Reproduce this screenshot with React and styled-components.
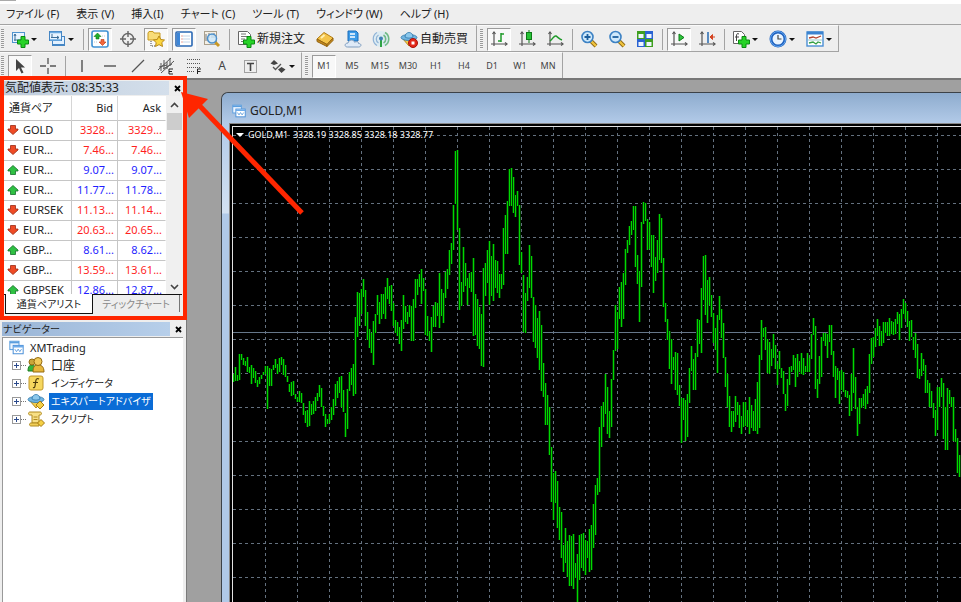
import styled, { createGlobalStyle, css } from "styled-components";

const colors = {
  face: "#eeeeee",
  line: "#a3a3a3",
  red: "#ff2600",
  down: "#ff1f1f",
  up: "#1f1fff",
  bar: "#00d800",
  barEdge: "#003a00",
  grid: "#64717f",
};

const GlobalStyle = createGlobalStyle`
  * { box-sizing: border-box; }
  body {
    margin: 0;
    overflow: hidden;
    color: #222;
    font-family: "Noto Sans", "Noto Sans CJK JP", sans-serif;
    font-size: 12px;
    line-height: 16px;
    font-feature-settings: "palt";
  }
  button {
    border: 0;
    padding: 0;
    background: none;
    color: inherit;
    font: inherit;
    font-feature-settings: inherit;
    white-space: nowrap;
  }
  svg { display: block; flex: none; }
`;

const Page = styled.div`
  position: relative;
  display: flex;
  flex-direction: column;
  height: 100vh;
  background: ${colors.face};
  overflow: hidden;
`;

const TitleEdge = styled.div`
  height: 4px;
  flex: none;
  background: #fff;

  &::before {
    content: "";
    display: block;
    width: 16px;
    height: 1px;
    background: #aaa;
  }
`;

const MenuBar = styled.nav`
  display: flex;
  align-items: center;
  flex: none;
  height: 21px;
  gap: 17px;
  padding-left: 6px;
  font-size: 11px;
  border-bottom: 1px solid ${colors.line};
`;

const ToolRow = styled.div`
  display: flex;
  flex: none;
  height: ${({ $last }) => ($last ? "28px" : "27px")};
  border-bottom: ${({ $last }) => ($last ? "2px solid #777" : "0")};
`;

const ToolGroup = styled.div`
  display: flex;
  align-items: center;
  gap: 4px;
  padding: 1px ${({ $end = 2 }) => $end}px 0 ${({ $start = 0 }) => $start}px;
  border-top: 1px solid #fafafa;
  border-right: 1px solid ${colors.line};
  border-bottom: ${({ $flat }) => ($flat ? "0" : `1px solid ${colors.line}`)};
`;

const Grip = styled.span`
  width: 3px;
  height: 20px;
  margin-left: 1px;
  background: repeating-linear-gradient(#999 0 1px, #f4f4f4 1px 2px);
`;

const Divider = styled.span`
  width: 1px;
  height: 21px;
  margin-left: 1px;
  background: ${colors.line};
`;

const ToolButton = styled.button`
  display: flex;
  align-items: center;
  justify-content: ${({ $wide }) => ($wide ? "flex-start" : "center")};
  gap: 2px;
  width: ${({ $label, $menu }) => ($label ? "auto" : $menu ? "33px" : "24px")};
  height: 23px;
  padding: 0 ${({ $label }) => ($label ? "4px" : "0")} 0 ${({ $wide }) => ($wide ? "3px" : "0")};
  font-size: ${({ $small }) => ($small ? "9px" : "12px")};
  color: ${({ $label }) => ($label ? "#222" : "#444")};

  ${({ $on }) =>
    $on &&
    css`
      background: #f8f8f8;
      border: 1px solid #fff;
      border-top-color: #9b9b9b;
      border-left-color: #9b9b9b;
    `}
`;

const Caret = styled.span`
  border: 3px solid transparent;
  border-top-color: #111;
  border-bottom: 0;
`;

const Body = styled.div`
  display: flex;
  flex: 1;
  min-height: 0;
`;

const Sidebar = styled.aside`
  display: flex;
  flex-direction: column;
  flex: none;
  width: 187px;
  border-right: 1px solid #7a7a7a;
`;

const Market = styled.section`
  position: relative;
  flex: none;
  height: 240px;
  padding: 0 4px;

  &::after {
    content: "";
    position: absolute;
    inset: -4px -1px 0 0;
    border: 4px solid ${colors.red};
    pointer-events: none;
  }
`;

const PanelTitle = styled.header`
  display: flex;
  height: 16px;
  line-height: 15px;
  align-items: center;
  justify-content: space-between;
`;

const PanelName = styled.h2`
  flex: 1;
  height: 14px;
  margin: 0;
  padding-left: 1px;
  font-size: ${({ $active }) => ($active ? "10px" : "12px")};
  line-height: 14px;
  font-weight: 400;
  background: ${({ $active }) =>
    $active
      ? "linear-gradient(90deg, #9ab5d6, #b7cfea)"
      : "linear-gradient(90deg, #bfcddd, #d4dfeb)"};
`;

const CloseButton = styled.button`
  display: flex;
  align-items: center;
  justify-content: flex-end;
  width: 13px;
  height: 14px;
  padding-right: 1px;
`;

const QuoteArea = styled.div`
  display: flex;
  height: 199px;
  overflow: hidden;
  background: #fff;
  border-bottom: 1px solid #111;
`;

const QuoteTable = styled.table`
  flex: 1;
  align-self: flex-start;
  table-layout: fixed;
  border-collapse: separate;
  border-spacing: 0;
  font-size: 11px;
`;

const headWidths = { symbol: "68px", bid: "46px", ask: "48px" };

const Head = styled.th`
  height: 25px;
  width: ${({ $column }) => headWidths[$column]};
  padding: 0 4px 1px 5px;
  border-bottom: 1px solid #c6c6c6;
  border-right: 1px solid #d6d6d6;
  font-weight: 400;
  text-align: ${({ $column }) => ($column === "symbol" ? "left" : "right")};

  &:last-child { border-right-color: #fff; }
`;

const Cell = styled.td`
  height: 20px;
  padding: 0 3px 2px 0;
  border-bottom: 1px solid #c6c6c6;
  border-right: 1px solid #c6c6c6;
  text-align: right;
  white-space: nowrap;
  color: ${({ $up }) => ($up ? colors.up : colors.down)};

  &:last-child { border-right-color: #fff; }
`;

const SymbolCell = styled(Cell)`
  padding-left: 3px;
  color: #222;
`;

const SymbolBox = styled.span`
  display: flex;
  align-items: center;
  gap: 4px;
`;

const ScrollBar = styled.div`
  display: flex;
  flex-direction: column;
  align-items: center;
  justify-content: space-between;
  width: 16px;
  padding: 6px 0 4px;
  background: #f0f0f0;
`;

const ScrollThumb = styled.span`
  width: 15px;
  height: 17px;
  margin: 5px 0 auto;
  background: #cdcdcd;
`;

const Tabs = styled.div`
  display: flex;
  height: 22px;
  align-items: flex-start;
  padding-left: 1px;
`;

const Tab = styled.button`
  width: ${({ $on }) => ($on ? "88px" : "87px")};
  height: ${({ $on }) => ($on ? "20px" : "17px")};
  font-size: 10px;
  color: ${({ $on }) => ($on ? "#222" : "#888")};
  border-right: 1px solid #777;

  ${({ $on }) =>
    $on &&
    css`
      margin-top: -1px;
      background: #fff;
      border: 1px solid #111;
      border-top: 0;
    `}
`;

const Navigator = styled.section`
  display: flex;
  flex: 1;
  flex-direction: column;
  padding: 1px 3px 0 2px;
`;

const Tree = styled.ul`
  flex: 1;
  margin: 0;
  padding: 0 0 0 6px;
  list-style: none;
  background: #fff;
  border-top: 1px solid #999;
  border-left: 1px solid #999;
`;

const Node = styled.li`
  display: flex;
  align-items: center;
  height: 18px;
  gap: 4px;
`;

const Expander = styled.button`
  display: grid;
  place-items: center;
  width: 9px;
  height: 9px;
  margin-left: 3px;
  border: 1px solid #999;
  background: #fff;
`;

const Dots = styled.span`
  width: 5px;
  margin: 0 -3px 0 -4px;
  border-top: 1px dotted #777;
`;

const NodeName = styled.span`
  padding: 0 2px;
  line-height: 17px;
  font-size: ${({ $size = 10 }) => $size}px;
  color: ${({ $on }) => ($on ? "#fff" : "#222")};
  background: ${({ $on }) => ($on ? "#0a6cd6" : "transparent")};
`;

const Workspace = styled.main`
  display: flex;
  flex: 1;
  min-width: 0;
  padding: 12px 0 0 34px;
  background: #a0a0a0;
`;

const ChartWindow = styled.section`
  display: flex;
  flex: 1;
  flex-direction: column;
  min-width: 0;
  padding-left: 7px;
  border: 1px solid #3c4248;
  border-width: 1px 0 0 1px;
  border-radius: 7px 0 0 0;
  background: linear-gradient(#8eacce, #b2cae8 30px, #d3e1f2 120px, #b0c9e8 121px);
`;

const ChartTitle = styled.header`
  display: flex;
  align-items: center;
  gap: 4px;
  height: 30px;
  margin-left: -7px;
  padding: 5px 0 0 10px;
  background: linear-gradient(#8eacce, #b2cae8);
  border-radius: 7px 0 0 0;
`;

const ChartFrame = styled.div`
  flex: 1;
  min-height: 0;
  padding: 2px 0 0 2px;
  background: #000;
  border: 1px solid #888;
  border-width: 1px 0 0 1px;
`;

const ChartPane = styled.div`
  position: relative;
  height: 100%;
  border: 1px solid #e2e2e2;
  border-width: 1px 0 0 1px;
`;

const ChartInfo = styled.div`
  position: absolute;
  top: 0;
  left: 3px;
  display: flex;
  align-items: center;
  gap: 4px;
  color: #fff;
  font-size: 9px;
  white-space: pre;

  &::before {
    content: "";
    border: 4px solid transparent;
    border-top-color: #fff;
    border-bottom: 0;
  }
`;

const Callout = styled.svg`
  position: absolute;
  left: 176px;
  top: 86px;
`;

// one "high-low" pair for each minute, in pane pixels counted from PANE_Y
const PANE_X = 233;
const PANE_Y = 127;
const bars = `
374-382 367-381 375-381 354-380 354-360 358-365 361-366 357-372 367-373 365-384 368-378 371-383
380-387 377-384 375-379 372-375 366-374 366-409 368-386 369-386 365-370 359-368 364-374 358-372
357-365 359-375 365-377 376-382 384-392 382-396 381-395 394-399 397-402 391-402 393-403 403-415
411-423 410-427 401-426 404-415 401-414 397-411 393-401 385-397 388-407 406-416 414-427 419-424
414-423 407-420 399-415 384-406 381-398 377-393 376-407 390-412 413-437 389-429 372-391 368-385
364-396 317-394 292-337 293-326 289-314 279-297 290-326 312-340 329-348 333-353 321-365 314-333
295-315 302-324 294-319 294-314 287-319 278-299 286-304 285-311 303-326 320-333 322-336 327-344
320-351 295-329 306-322 312-324 305-317 306-341 299-341 279-308 279-295 274-287 269-304 278-291
289-335 316-336 331-341 317-352 306-327 302-327 303-316 273-328 289-316 293-323 272-298 269-289
250-275 243-264 205-250 151-204 150-230 228-310 282-306 247-292 263-286 278-305 273-288 272-292
258-336 294-335 299-346 307-349 314-366 268-367 263-296 250-283 241-305 256-296 244-301 260-288
261-293 274-298 274-289 228-285 215-254 201-254 169-206 168-206 177-213 195-217 191-206 205-265
252-273 275-332 293-333 277-301 245-288 256-298 297-342 305-348 318-358 311-370 325-391 363-397
383-425 395-425 407-455 447-502 473-520 471-503 481-528 507-540 512-558 545-572 528-563 541-577
535-586 536-586 534-589 563-578 554-602 535-580 534-568 533-571 540-575 541-558 529-572 525-570
504-548 485-535 478-495 427-492 406-447 402-427 374-414 387-434 411-438 379-427 350-380 305-351
312-349 287-319 282-327 273-319 249-285 240-253 226-245 221-235 206-230 206-267 255-284 271-322
222-287 202-224 203-221 219-250 222-249 235-267 235-293 257-281 240-273 214-260 218-263 258-307
303-322 319-340 331-369 339-384 357-370 352-390 353-395 385-406 398-443 398-420 400-441 394-437
368-403 346-371 359-390 353-390 319-357 320-344 288-353 256-300 255-315 280-323 277-305 295-317
313-343 328-350 315-373 296-320 309-338 323-358 357-387 374-407 396-427 411-432 411-427 396-422
402-415 405-428 416-434 402-427 402-426 410-427 397-434 405-428 411-431 399-431 382-434 355-428
320-360 328-337 327-350 339-373 342-374 349-366 334-358 345-369 364-385 351-369 368-378 371-394
394-411 379-406 367-385 366-372 355-370 358-387 354-377 361-372 353-374 358-375 366-372 353-372
358-372 334-359 318-335 326-389 379-398 356-384 337-377 333-341 333-346 334-358 325-342 325-355
351-377 366-398 368-380 371-404 370-390 372-392 390-397 391-398 395-416 374-411 348-393 377-409
407-436 398-424 398-408 394-406 389-409 386-404 354-393 338-364 337-357 328-347 319-336 326-346
331-346 322-343 322-333 322-336 318-336 321-334 322-335 319-334 312-324 314-340 309-328 299-314
303-319 311-327 321-341 320-337 337-350 333-358 344-378 369-379 353-376 359-371 365-393 380-393
383-407 391-407 403-418 410-436 387-430 387-407 378-397 383-439 407-450 388-450 390-404 397-407
397-441 429-442 438-473 455-477`
  .trim()
  .split(/\s+/)
  .map((pair) => pair.split("-").map(Number));

const barPath = bars.map(([high, low], i) => `M${PANE_X + i * 2 + 0.5} ${high}V${low}`).join("");
const columns = Array.from({ length: 60 }, (_, i) => 265 + i * 32);
const levels = Array.from({ length: 40 }, (_, i) => 135 + i * 34);

function PriceChart() {
  return (
    <svg width="100%" height="100%" aria-label="GOLD,M1">
      <g transform={`translate(${-PANE_X} ${-PANE_Y})`} fill="none" strokeWidth="1">
        <g stroke={colors.grid} strokeDasharray="3 3">
          {columns.map((x) => <path key={x} d={`M${x + 0.5} ${PANE_Y}V1500`} />)}
          {levels.map((y) => <path key={y} d={`M${PANE_X} ${y + 0.5}H2200`} />)}
        </g>
        <path d={`M${PANE_X} 332.5H2200`} stroke="#66778a" />
        <path d={barPath} stroke={colors.barEdge} strokeWidth="3" />
        <path d={barPath} stroke={colors.bar} />
      </g>
    </svg>
  );
}

const Svg = ({ size = 18, children }) => (
  <svg width={size} height={size} viewBox="0 0 18 18" fill="none" aria-hidden="true">
    {children}
  </svg>
);

const Plus = ({ x = 6, y = 6 }) => (
  <path
    transform={`translate(${x} ${y})`}
    d="M4 .5h4V4h3.500v4H8v3.500H4V8H.5V4H4z"
    fill="#27d327"
    stroke="#0b8a12"
  />
);

const Axes = () => (
  <g stroke="#555" strokeWidth="1.200">
    <path d="M4 2v14M1 14h16" />
    <path d="M2.500 4L4 2l1.500 2M15 12.500l2 1.500-2 1.500" />
  </g>
);

const Lens = ({ plus }) => (
  <>
    <path d="M11 11l5 5" stroke="#8a6410" strokeWidth="4" />
    <path d="M11 11l5 5" stroke="#efc23c" strokeWidth="2.400" />
    <circle cx="7.500" cy="7" r="5.500" fill="#cfe9fb" stroke="#3d82c4" strokeWidth="1.600" />
    <path d={plus ? "M4.500 7h6M7.500 4v6" : "M4.500 7h6"} stroke="#1d5f9e" strokeWidth="1.800" />
  </>
);

const Hat = () => (
  <>
    <path d="M3 9l6 7 6-7-1-2H4z" fill="#f0cb4c" stroke="#b98b1b" />
    <ellipse cx="9" cy="7.500" rx="8" ry="3" fill="#72b5e0" stroke="#2d77ab" strokeWidth=".8" />
    <path d="M5 7c0-6 8-6 8 0-2 1.500-6 1.500-8 0z" fill="#8cc8ec" stroke="#2d77ab" strokeWidth=".8" />
  </>
);

const icons = {
  newChart: (
    <>
      <rect x="1.500" y="2.500" width="12" height="10" fill="#e8f4ff" stroke="#4f94cf" />
      <path d="M4 4v7M3 10h8M3 6l1-2 1 2" stroke="#3c6e98" />
      <Plus />
    </>
  ),
  windows: (
    <>
      <rect x="4.500" y="6.500" width="12" height="9" fill="#e3f1ff" stroke="#4586c4" />
      <path d="M5 15h11" stroke="#4586c4" strokeWidth="2" />
      <rect x="1.500" y="1.500" width="12" height="9" fill="#e8f4ff" stroke="#4586c4" />
      <path d="M2 2.500h11M2 10h11" stroke="#69a9e0" strokeWidth="1.500" />
      <path d="M4 4v4M3 7.500h8M9 6l2 1.500L9 9" stroke="#3c6e98" />
    </>
  ),
  quotes: (
    <>
      <rect x="1" y="1" width="16" height="16" rx="2" fill="#fff" stroke="#3f91d4" strokeWidth="1.600" />
      <path d="M6.500 3L3 6.500h2V9h3V6.500h2z" fill="#1fae2b" stroke="#0b7a15" strokeWidth=".6" />
      <path d="M11.500 15.500L15 12h-2V9.500h-3V12H8z" fill="#f2663a" stroke="#bb3210" strokeWidth=".6" />
      <path d="M11 6h4M3 12h4" stroke="#bcc8d4" strokeDasharray="1 1" />
    </>
  ),
  target: (
    <g stroke="#666" strokeWidth="1.400">
      <circle cx="9" cy="9" r="5.500" />
      <path d="M9 1v6M9 11v6M1 9h6M11 9h6" />
    </g>
  ),
  favorites: (
    <>
      <path d="M1 3l1-1.500h4L7 3h6v7H1z" fill="#f8dc78" stroke="#c79a20" />
      <path d="M4 11v5h5" stroke="#444" strokeDasharray="1 1" />
      <path d="M12 6l1.800 3.500 3.700.5-2.700 2.600.7 3.900-3.500-1.900-3.500 1.900.7-3.900L6.500 10l3.700-.5z" fill="#fbd63e" stroke="#b88714" />
    </>
  ),
  terminal: (
    <>
      <rect x="1" y="2" width="16" height="14" rx="1" fill="#fff" stroke="#2a68b4" strokeWidth="1.600" />
      <path d="M2 3h3v12H2z" fill="#3c86d8" />
      <path d="M8 6h7M8 9h7M8 12h7" stroke="#c1d4e8" />
      <path d="M6.500 6h1M6.500 9h1M6.500 12h1" stroke="#d34431" />
    </>
  ),
  tester: (
    <>
      <rect x="1.500" y="1.500" width="12" height="13" fill="#f5f0e6" stroke="#aaa08c" />
      <path d="M3 4v7M6 3v5M9 4v4M11 3v5" stroke="#777" />
      <path d="M12 12l4 4" stroke="#c99824" strokeWidth="3" />
      <circle cx="9" cy="8.500" r="4.500" fill="#cde8fbcc" stroke="#4c90cc" strokeWidth="1.500" />
    </>
  ),
  order: (
    <>
      <path d="M1.500 1.500h9l3 3v10h-12z" fill="#fff" stroke="#666" />
      <path d="M4 4h5M4 6.500h7M4 9h4M4 11.500h3" stroke="#777" />
      <Plus />
    </>
  ),
  book: (
    <>
      <path d="M1 9l7-6.500 9 5.500-6 6.500z" fill="#f4c44a" stroke="#b37c12" />
      <path d="M1 9l10 5.500v2L1 11.500zM11 14.500L17 8v2.500l-6 6z" fill="#c58a1c" stroke="#946410" />
      <path d="M5 8l3.500-3" stroke="#fff0b0" strokeWidth="2" />
    </>
  ),
  cloud: (
    <>
      <path d="M4 1h8l2 2v8H4z" fill="#3b9be8" stroke="#1a6cba" />
      <path d="M6 4h5M6 7h5" stroke="#fff" strokeWidth="1.500" />
      <path d="M3.500 17C0 17 .5 13 4 13c1-4 6-3.500 6.500-.8C13 11 15 12 14.500 13.500c3.500 0 3 3.500 0 3.500z" fill="#dfeaf7" stroke="#7f9dbf" />
    </>
  ),
  signal: (
    <>
      <circle cx="9" cy="9" r="8" fill="#dcebf2" />
      <path d="M5 15.500a7.500 7.500 0 010-13M6.500 13a4.700 4.700 0 010-8" stroke="#8fb2d6" strokeWidth="1.200" />
      <path d="M13 15.500a7.500 7.500 0 000-13M11.500 13a4.700 4.700 0 000-8" stroke="#6fba86" strokeWidth="1.600" />
      <path d="M8 9h2v8H8z" fill="#2fa344" />
      <circle cx="9" cy="8.500" r="2" fill="#3f7fb5" />
    </>
  ),
  autoTrade: (
    <>
      <Hat />
      <circle cx="13" cy="13" r="4.500" fill="#e2281a" stroke="#a91208" />
      <rect x="11.500" y="11.500" width="3" height="3" fill="#fff" />
    </>
  ),
  barChart: (
    <>
      <Axes />
      <path d="M11 3v9M11 4h3M8 11h3" stroke="#1f9a2a" strokeWidth="1.500" />
    </>
  ),
  candles: (
    <>
      <Axes />
      <path d="M11 0v13" stroke="#0d7a17" />
      <rect x="8.500" y="2.500" width="5" height="7" fill="#27c236" stroke="#0d7a17" />
    </>
  ),
  lineChart: (
    <>
      <Axes />
      <path d="M4 11c3-2 4-6 6-5s3 3 6 4" stroke="#1f9a2a" strokeWidth="1.500" />
    </>
  ),
  zoomIn: <Lens plus />,
  zoomOut: <Lens />,
  tile: (
    <>
      <path d="M1 1h8v8H1zM9 9h8v8H9z" fill="#3f9e1f" />
      <path d="M9 1h8v8H9zM1 9h8v8H1z" fill="#2a63d2" />
      <path d="M2.500 4h5v4h-5zM10.500 4h5v4h-5zM2.500 12h5v4h-5zM10.500 12h5v4h-5z" fill="#eef5ff" />
    </>
  ),
  autoScroll: (
    <>
      <Axes />
      <path d="M9 4l5 3.500L9 11z" fill="#2fc53d" stroke="#0d7a17" />
    </>
  ),
  shift: (
    <>
      <Axes />
      <path d="M10 2v11" stroke="#2468b0" strokeWidth="1.500" />
      <path d="M17 7h-4M14.500 4.500L12 7l2.500 2.500z" fill="#d44422" stroke="#d44422" />
    </>
  ),
  indicators: (
    <>
      <path d="M1.500 1.500h8l3 3v9h-11z" fill="#fff" stroke="#666" />
      <path d="M7 4c-2-1-2.500 0-2.500 2v5M3 7h4" stroke="#444" />
      <Plus />
    </>
  ),
  clock: (
    <>
      <circle cx="9" cy="9" r="7" fill="#e9f4ff" stroke="#1f62c0" strokeWidth="3" />
      <circle cx="9" cy="9" r="7.500" stroke="#65a8f0" />
      <path d="M9 5v4h3.500" stroke="#444" strokeWidth="1.200" />
    </>
  ),
  template: (
    <>
      <rect x="1" y="2" width="16" height="14" fill="#fff" stroke="#4a8fd4" strokeWidth="1.400" />
      <path d="M1 3h16" stroke="#3b83d0" strokeWidth="3" />
      <path d="M3 8l4-1 3 1 5-2" stroke="#b2432e" strokeWidth="1.300" />
      <path d="M2 10h14" stroke="#9cc" />
      <path d="M3 13l4-1 3 2 2-2 3 1" stroke="#35a045" strokeWidth="1.300" />
    </>
  ),
  cursor: <path d="M5 2v12l3-3 2.500 5.500 2-1L10 10.500h4z" fill="#444" />,
  cross: <path d="M9 1v6M9 11v6M1 9h6M11 9h6" stroke="#555" strokeWidth="1.300" />,
  vertical: <path d="M9 3v12" stroke="#444" strokeWidth="1.300" />,
  horizontal: <path d="M3 9h12" stroke="#444" strokeWidth="1.300" />,
  trend: <path d="M3 15L15 3" stroke="#555" strokeWidth="1.300" />,
  channel: (
    <>
      <path d="M1 13L14 1M4 16L17 4M4 6v8M7 3v9M10 5v7M13 1v8M2 10l8-2M6 12l9-5" stroke="#555" />
      <path d="M16 12h-4v5h4M12 14.500h3" stroke="#222" />
    </>
  ),
  fibo: (
    <>
      <path d="M2 2.500h14M2 6.500h14M2 10.500h14M2 14.500h8" stroke="#555" strokeDasharray="1 1" />
      <path d="M12.500 17v-5H16M12.500 14.500h3" stroke="#222" />
    </>
  ),
  label: (
    <>
      <rect x="3.500" y="3.500" width="12" height="12" stroke="#555" strokeDasharray="1 1" />
      <path d="M6 6.500h7M9.500 6.500V14" stroke="#444" strokeWidth="1.600" />
    </>
  ),
  shapes: (
    <>
      <path d="M5 3l4 3.500L5 8 1.500 6.500zM12.500 10l4 2.500-4 3.500-3.500-3.500z" fill="#444" />
      <path d="M4 10l2.500 2.500L12 7" stroke="#555" strokeWidth="1.300" />
    </>
  ),
  chartWindow: (
    <>
      <rect x="1" y="1.500" width="11" height="10" fill="#eef6ff" stroke="#5b9ede" strokeWidth="1.200" />
      <path d="M1 3h11" stroke="#5b9ede" strokeWidth="2" />
      <rect x="5" y="6.500" width="12" height="10" fill="#fff" stroke="#4b90d8" strokeWidth="1.200" />
      <path d="M5 8h12" stroke="#6cabea" strokeWidth="2" />
      <path d="M7 11l2 3 2-3 2 3 2-3" stroke="#4b90d8" />
    </>
  ),
  accounts: (
    <>
      <path d="M1 15c0-5 2-6 4-6s4 1 4 6z" fill="#35b53c" stroke="#1c7d22" />
      <circle cx="5" cy="6" r="3" fill="#c9a53a" stroke="#946a10" />
      <path d="M6 16c0-6 2-7 5-7s6 1 6 7z" fill="#e6b63b" stroke="#946a10" />
      <circle cx="11" cy="5.500" r="4" fill="#f0cb5c" stroke="#946a10" />
    </>
  ),
  indicator: (
    <>
      <rect x="2" y="2" width="14" height="14" rx="2" fill="#f6d75e" stroke="#c0962a" />
      <path d="M12 5c-2-1-3 0-3.200 2L8 12c-.2 1.500-1 2-2 1.500M6 8.500h5" stroke="#4a3a0c" strokeWidth="1.200" />
    </>
  ),
  expert: (
    <>
      <Hat />
      <path d="M13 9l4 4-4 4-4-4z" fill="#f4cf45" stroke="#a67c12" />
    </>
  ),
  script: (
    <>
      <path d="M3 2h10c2 0 2 3 0 3h-1v8H5V5H3C1 5 1 2 3 2z" fill="#f7df85" stroke="#b08a20" />
      <path d="M4 13h8v3H4c-2 0-2-3 0-3zM6.500 7h4M6.500 9.500h4" fill="#f2cf58" stroke="#b08a20" />
      <path d="M14 9.500l3.500 3.500-3.500 3.500-3.500-3.500z" fill="#f4cf45" stroke="#a67c12" />
    </>
  ),
};

const menus = [
  "ファイル (F)", "表示 (V)", "挿入(I)", "チャート (C)", "ツール (T)", "ウィンドウ (W)", "ヘルプ (H)",
];

const mainTools = [
  { icon: "newChart", menu: true },
  { icon: "windows", menu: true },
  "divider",
  { icon: "quotes", on: true },
  { icon: "target" },
  { icon: "favorites", on: true },
  { icon: "terminal", on: true },
  { icon: "tester" },
  "divider",
  { icon: "order", label: "新規注文" },
  { icon: "book" },
  { icon: "cloud" },
  { icon: "signal" },
  { icon: "autoTrade", label: "自動売買" },
];

const chartTools = [
  { icon: "barChart", on: true },
  { icon: "candles" },
  { icon: "lineChart" },
  "divider",
  { icon: "zoomIn" },
  { icon: "zoomOut" },
  { icon: "tile" },
  "divider",
  { icon: "autoScroll", on: true },
  { icon: "shift" },
  "divider",
  { icon: "indicators", menu: true },
  { icon: "clock", menu: true },
  { icon: "template", menu: true },
];

const drawTools = [
  { icon: "cursor", on: true },
  { icon: "cross" },
  "divider",
  { icon: "vertical" },
  { icon: "horizontal" },
  { icon: "trend" },
  { icon: "channel" },
  { icon: "fibo" },
  { text: "A" },
  { icon: "label" },
  { icon: "shapes", menu: true },
];

const periods = ["M1", "M5", "M15", "M30", "H1", "H4", "D1", "W1", "MN"].map((text, i) => ({
  text,
  small: true,
  on: i === 0,
}));

const quotes = [
  ["GOLD", "3328...", "3329...", false],
  ["EUR...", "7.46...", "7.46...", false],
  ["EUR...", "9.07...", "9.07...", true],
  ["EUR...", "11.77...", "11.78...", true],
  ["EURSEK", "11.13...", "11.14...", false],
  ["EUR...", "20.63...", "20.65...", false],
  ["GBP...", "8.61...", "8.62...", true],
  ["GBP...", "13.59...", "13.61...", false],
  ["GBPSEK", "12.86...", "12.87...", true],
];

const nodes = [
  { icon: "accounts", name: "口座", size: 12 },
  { icon: "indicator", name: "インディケータ" },
  { icon: "expert", name: "エキスパートアドバイザ", on: true },
  { icon: "script", name: "スクリプト" },
];

function Tools({ items, ...rest }) {
  return (
    <ToolGroup {...rest}>
      <Grip />
      {items.map((tool, i) =>
        tool === "divider" ? (
          <Divider key={i} />
        ) : (
          <ToolButton
            key={i}
            type="button"
            aria-label={tool.icon}
            $on={tool.on}
            $menu={tool.menu}
            $label={tool.label}
            $wide={tool.menu || tool.label}
            $small={tool.small}
          >
            {tool.icon && <Svg>{icons[tool.icon]}</Svg>}
            {tool.label || tool.text}
            {tool.menu && <Caret />}
          </ToolButton>
        )
      )}
    </ToolGroup>
  );
}

const Direction = ({ up }) => (
  <svg width="12" height="12" viewBox="0 0 12 12" aria-hidden="true">
    <path
      d={up ? "M6 1.500l5 4.500v1H8.500v3.500h-5V7H1V6z" : "M6 10.500L1 6V5h2.500V1.500h5V5H11v1z"}
      fill={up ? "#2fc043" : "#ee4b26"}
      stroke={up ? "#15702a" : "#9c2a12"}
      strokeWidth=".8"
    />
  </svg>
);

const Chevron = ({ down }) => (
  <svg width="9" height="6" viewBox="0 0 9 6" fill="none" aria-hidden="true">
    <path d={down ? "M1 1l3.500 3.500L8 1" : "M1 5l3.500-3.500L8 5"} stroke="#444" strokeWidth="1.600" />
  </svg>
);

function Title({ children, active }) {
  return (
    <PanelTitle>
      <PanelName $active={active}>{children}</PanelName>
      <CloseButton type="button" aria-label="close">
        <svg width="7" height="7" viewBox="0 0 7 7" aria-hidden="true">
          <path d="M1 1l5 5M6 1L1 6" stroke="#000" strokeWidth="1.800" />
        </svg>
      </CloseButton>
    </PanelTitle>
  );
}

function MarketWatch() {
  return (
    <Market>
      <Title>気配値表示: 08:35:33</Title>
      <QuoteArea>
        <QuoteTable>
          <thead>
            <tr>
              <Head $column="symbol">通貨ペア</Head>
              <Head $column="bid">Bid</Head>
              <Head $column="ask">Ask</Head>
            </tr>
          </thead>
          <tbody>
            {quotes.map(([symbol, bid, ask, up], i) => (
              <tr key={i}>
                <SymbolCell>
                  <SymbolBox><Direction up={up} />{symbol}</SymbolBox>
                </SymbolCell>
                <Cell $up={up}>{bid}</Cell>
                <Cell $up={up}>{ask}</Cell>
              </tr>
            ))}
          </tbody>
        </QuoteTable>
        <ScrollBar>
          <Chevron />
          <ScrollThumb />
          <Chevron down />
        </ScrollBar>
      </QuoteArea>
      <Tabs role="tablist">
        <Tab type="button" role="tab" aria-selected="true" $on>通貨ペアリスト</Tab>
        <Tab type="button" role="tab" aria-selected="false">ティックチャート</Tab>
      </Tabs>
    </Market>
  );
}

function NavigatorPanel() {
  return (
    <Navigator>
      <Title active>ナビゲーター</Title>
      <Tree>
        <Node>
          <Svg size={15}>{icons.chartWindow}</Svg>
          <NodeName $size={11}>XMTrading</NodeName>
        </Node>
        {nodes.map(({ icon, name, size, on }) => (
          <Node key={icon}>
            <Expander type="button" aria-label={name}>
              <svg width="5" height="5" viewBox="0 0 5 5" aria-hidden="true">
                <path d="M0 2.500h5M2.500 0v5" stroke="#2b4a8c" />
              </svg>
            </Expander>
            <Dots />
            <Svg>{icons[icon]}</Svg>
            <NodeName $size={size} $on={on}>{name}</NodeName>
          </Node>
        ))}
      </Tree>
    </Navigator>
  );
}

export default function App() {
  return (
    <Page>
      <GlobalStyle />
      <TitleEdge />
      <MenuBar>
        {menus.map((menu) => <button key={menu} type="button">{menu}</button>)}
      </MenuBar>
      <ToolRow>
        <Tools items={mainTools} $end={4} />
        <Tools items={chartTools} $start={2} />
      </ToolRow>
      <ToolRow $last>
        <Tools items={drawTools} $flat />
        <Tools items={periods} $flat $start={2} />
      </ToolRow>
      <Body>
        <Sidebar>
          <MarketWatch />
          <NavigatorPanel />
        </Sidebar>
        <Workspace>
          <ChartWindow>
            <ChartTitle>
              <Svg size={14}>{icons.chartWindow}</Svg>
              GOLD,M1
            </ChartTitle>
            <ChartFrame>
              <ChartPane>
                <PriceChart />
                <ChartInfo>{"GOLD,M1  3328.19 3328.85 3328.18 3328.77"}</ChartInfo>
              </ChartPane>
            </ChartFrame>
          </ChartWindow>
        </Workspace>
      </Body>
      <Callout width="132" height="132" aria-hidden="true">
        <path d="M20 16l106 111" stroke={colors.red} strokeWidth="5" />
        <path d="M5 6l27 7-19 19z" fill={colors.red} />
      </Callout>
    </Page>
  );
}
